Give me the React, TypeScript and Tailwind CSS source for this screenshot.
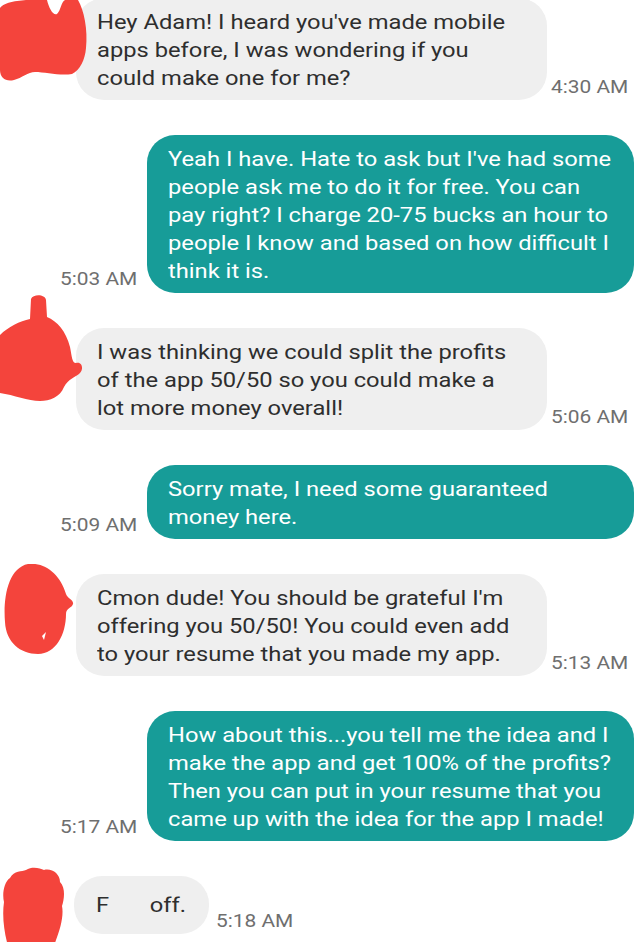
import type { ReactNode } from "react";

type Side = "them" | "me";

type Msg = {
  side: Side;
  lines: ReactNode[];
  time: string;
  blob?: number;
};

const messages: Msg[] = [
  {
    side: "them",
    lines: [
      "Hey Adam! I heard you've made mobile",
      "apps before, I was wondering if you",
      "could make one for me?",
    ],
    time: "4:30 AM",
    blob: 0,
  },
  {
    side: "me",
    lines: [
      "Yeah I have. Hate to ask but I've had some",
      "people ask me to do it for free. You can",
      "pay right? I charge 20-75 bucks an hour to",
      "people I know and based on how difficult I",
      "think it is.",
    ],
    time: "5:03 AM",
  },
  {
    side: "them",
    lines: [
      "I was thinking we could split the profits",
      "of the app 50/50 so you could make a",
      "lot more money overall!",
    ],
    time: "5:06 AM",
    blob: 1,
  },
  {
    side: "me",
    lines: ["Sorry mate, I need some guaranteed", "money here."],
    time: "5:09 AM",
  },
  {
    side: "them",
    lines: [
      "Cmon dude! You should be grateful I'm",
      "offering you 50/50! You could even add",
      "to your resume that you made my app.",
    ],
    time: "5:13 AM",
    blob: 2,
  },
  {
    side: "me",
    lines: [
      "How about this...you tell me the idea and I",
      "make the app and get 100% of the profits?",
      "Then you can put in your resume that you",
      "came up with the idea for the app I made!",
    ],
    time: "5:17 AM",
  },
];

// red scribbles drawn over the avatars
function Blob({ kind }: { kind: number }) {
  if (kind === 0) {
    return (
      <svg className="absolute left-0 top-[2px] z-10" width="90" height="84" viewBox="0 0 90 84">
        <path
          fill="#f4443c"
          d="M0,8 C4,2 20,0 30,0 L47,0 C49,8 53,16 57,14 C61,10 61,2 65,0 L78,0 C84,10 88,30 86,48 C85,60 80,70 72,74 C60,76 45,72 35,72 C28,72 22,78 14,80 C6,82 0,78 0,70 Z"
        />
      </svg>
    );
  }
  if (kind === 1) {
    return (
      <svg className="absolute left-0 top-[-33px] z-10" width="90" height="110" viewBox="0 0 90 110">
        <path
          fill="#f4443c"
          d="M31,4 C33,-1 45,-1 46,5 L47,22 C57,26 66,36 70,52 C72,62 72,68 76,68 C82,66 84,74 80,78 C76,82 68,84 64,92 C60,102 50,106 40,106 C28,106 14,100 0,98 L0,40 C8,32 20,26 30,24 Z"
        />
      </svg>
    );
  }
  if (kind === 2) {
    return (
      <svg className="absolute left-0 top-[-10px] z-10" width="80" height="94" viewBox="0 0 80 94">
        <path
          fill="#f4443c"
          d="M28,0 C45,-2 60,10 66,30 C67,34 74,36 73,40 C72,44 66,44 66,50 C66,70 56,90 38,90 C20,90 6,78 5,58 C3,34 8,4 28,0 Z"
        />
        <path fill="#ffffff" d="M42,72 L46,68 L44,76 Z" />
      </svg>
    );
  }
  return (
    <svg className="absolute left-0 top-[-10px] z-10" width="70" height="80" viewBox="0 0 70 80">
      <path
        fill="#f4443c"
        d="M10,12 C14,4 22,6 26,4 C32,0 40,2 44,4 C52,2 60,8 60,16 C66,22 64,34 62,40 C64,50 60,64 56,74 L54,80 L8,80 C4,66 2,50 4,36 C2,28 4,16 10,12 Z"
      />
    </svg>
  );
}

// the screenshot is stretched sideways a little, so the text is too
function Lines({ lines }: { lines: ReactNode[] }) {
  return (
    <div className="origin-left scale-x-[1.13]">
      {lines.map((l, i) => (
        <span key={i} className="block whitespace-nowrap">
          {l}
        </span>
      ))}
    </div>
  );
}

function Row({ m }: { m: Msg }) {
  if (m.side === "me") {
    return (
      <div className="flex items-end justify-end pr-[6px]">
        <span className="mb-[3px] mr-[10px] origin-right scale-x-[1.1] text-[19px] leading-[22px] text-[#6f6f6f]">
          {m.time}
        </span>
        <div className="w-[487px] rounded-[28px] bg-[#179c98] px-[21px] pb-[8px] pt-[10px] text-[21px] leading-[28px] text-white">
          <Lines lines={m.lines} />
        </div>
      </div>
    );
  }
  return (
    <div className="relative flex items-end pl-[76px]">
      {m.blob !== undefined && <Blob kind={m.blob} />}
      <div className="w-[471px] rounded-[28px] bg-[#efefef] px-[21px] pb-[8px] pt-[10px] text-[21px] leading-[28px] text-[#2e2e2e]">
        <Lines lines={m.lines} />
      </div>
      <span className="mb-[2px] ml-[4px] origin-left scale-x-[1.1] text-[19px] leading-[22px] text-[#6f6f6f]">
        {m.time}
      </span>
    </div>
  );
}

export default function App() {
  return (
    <div className="h-[942px] w-[640px] overflow-hidden bg-white font-['Roboto',sans-serif]">
      <div className="-mt-[2px] flex flex-col gap-[35px]">
        {messages.map((m, i) => (
          <Row key={i} m={m} />
        ))}

        <div className="relative flex items-end pl-[74px]">
          <Blob kind={3} />
          <div className="flex min-h-[58px] w-[135px] items-center rounded-[28px] bg-[#efefef] px-[22px] text-[21px] leading-[28px] text-[#2e2e2e]">
            <div className="flex origin-left scale-x-[1.13]">
              <span>F</span>
              <span className="ml-[36px]">off.</span>
            </div>
          </div>
          <span className="mb-[2px] ml-[7px] origin-left scale-x-[1.1] text-[19px] leading-[22px] text-[#6f6f6f]">
            5:18 AM
          </span>
        </div>
      </div>
    </div>
  );
}
